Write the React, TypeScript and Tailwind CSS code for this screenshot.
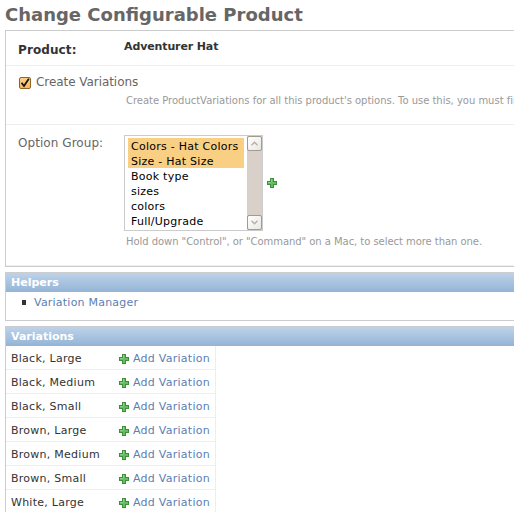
const optionGroups = [
  { label: "Colors - Hat Colors", selected: true },
  { label: "Size - Hat Size", selected: true },
  { label: "Book type", selected: false },
  { label: "sizes", selected: false },
  { label: "colors", selected: false },
  { label: "Full/Upgrade", selected: false },
];

const variations = [
  "Black, Large",
  "Black, Medium",
  "Black, Small",
  "Brown, Large",
  "Brown, Medium",
  "Brown, Small",
  "White, Large",
];

function PlusIcon() {
  return (
    <svg width="10" height="10" viewBox="0 0 10 10" className="block shrink-0" shapeRendering="crispEdges">
      <path d="M3 0h4v3h3v4H7v3H3V7H0V3h3z" fill="#3d8f3d" />
      <path d="M4 1h2v3h3v2H6v3H4V6H1V4h3z" fill="#66bd60" />
      <path d="M4 1h1v3H4zM1 4h3v1H1z" fill="#8bd184" />
    </svg>
  );
}

function ScrollButton({ down = false }: { down?: boolean }) {
  return (
    <div className="flex h-[15px] w-[15px] items-center justify-center rounded-[2px] border border-[#a09a8f] bg-linear-to-br from-white to-[#e9e7e3]">
      <svg width="7" height="5" viewBox="0 0 7 5" className={down ? "rotate-180" : ""}>
        <path d="M0.5 4.2L3.5 1.2L6.5 4.2" fill="none" stroke="#b9aea5" strokeWidth="1.4" />
      </svg>
    </div>
  );
}

function ModuleHeading({ children }: { children: string }) {
  return (
    <h2 className="h-[19px] bg-linear-to-b from-[#bdd3ea] to-[#94b4d6] pl-[5px] text-[11px] leading-[19px] font-bold text-white">
      {children}
    </h2>
  );
}

export default function App() {
  return (
    <div className="h-[512px] w-[514px] overflow-hidden bg-white pl-[5px] font-['DejaVu_Sans',sans-serif] text-[11px] whitespace-nowrap text-[#333]">
      <h1 className="h-[30px] pt-[4px] text-[18px] leading-[22px] font-bold text-[#666]">Change Configurable Product</h1>

      <section className="h-[237px] border-y border-l border-[#ccc]">
        <div className="flex h-[35px] border-b border-[#eee] pl-3 font-bold">
          <div className="w-[106px] pt-[11px] text-[12px] leading-4 tracking-[0.1px]">Product:</div>
          <div className="pt-[8px] leading-[15px] tracking-[-0.12px]">Adventurer Hat</div>
        </div>

        <div className="h-[59px] border-b border-[#eee] pt-[8px] pl-[13px]">
          <div className="flex h-4 items-start text-[12px] leading-4 tracking-[-0.06px] text-[#666]">
            <span className="mt-[3px] mr-[5px] flex h-3 w-3 items-center justify-center rounded-[2px] border border-[#936324] bg-linear-to-b from-[#ffd18b] to-[#f2b865]">
              <svg width="10" height="10" viewBox="0 0 10 10" className="shrink-0">
                <path d="M1.5 4.8L4 8L8.8 0.8" fill="none" stroke="#171512" strokeWidth="1.8" />
              </svg>
            </span>
            Create Variations
          </div>
          <p className="mt-[4px] pl-[107px] text-[10px] leading-[14px] tracking-[-0.02px] text-[#999]">
            Create ProductVariations for all this product's options. To use this, you must first add
          </p>
        </div>

        <div className="flex h-[141px] border-b border-[#eee] pt-[10px] pl-3">
          <div className="w-[106px] text-[12px] leading-4 tracking-[0.06px] text-[#666]">Option Group:</div>
          <div>
            <div className="flex items-center">
              <div className="flex h-[96px] w-[139px] border border-[#ccc]">
                <div className="w-[122px] pt-[2px] pl-[3px] tracking-[0.25px] text-black">
                  {optionGroups.map((option) => (
                    <div
                      key={option.label}
                      className={option.selected ? "h-[15px] w-[116px] bg-[#f9cf83] pl-[3px] leading-[17px]" : "h-[15px] w-[116px] pl-[3px] leading-[17px]"}
                    >
                      {option.label}
                    </div>
                  ))}
                </div>
                <div className="flex w-[15px] flex-col justify-between bg-[#d9d0ca]">
                  <ScrollButton />
                  <ScrollButton down />
                </div>
              </div>
              <div className="ml-1">
                <PlusIcon />
              </div>
            </div>
            <p className="mt-[4px] pl-[2px] text-[10px] leading-[14px] tracking-[-0.05px] text-[#999]">
              Hold down "Control", or "Command" on a Mac, to select more than one.
            </p>
          </div>
        </div>
      </section>

      <section className="mt-[5px] h-[49px] border-y border-l border-[#ccc]">
        <ModuleHeading>Helpers</ModuleHeading>
        <div className="flex h-[21px] items-center pl-[16px]">
          <span className="h-[5px] w-1 bg-[#333]" />
          <a className="ml-2 leading-[15px] tracking-[0.22px] text-[#5b80b2]">Variation Manager</a>
        </div>
      </section>

      <section className="mt-[5px] border-y border-l border-[#ccc]">
        <ModuleHeading>Variations</ModuleHeading>
        <div className="w-[210px] border-r border-[#eee]">
          {variations.map((name) => (
            <div key={name} className="flex h-6 items-start border-b border-[#eee] pt-[5px] pl-[5px] leading-[15px] tracking-[0.26px]">
              <span className="w-[108px]">{name}</span>
              <span className="mt-[3px]">
                <PlusIcon />
              </span>
              <a className="ml-1 text-[#5b80b2]">Add Variation</a>
            </div>
          ))}
        </div>
      </section>
    </div>
  );
}
